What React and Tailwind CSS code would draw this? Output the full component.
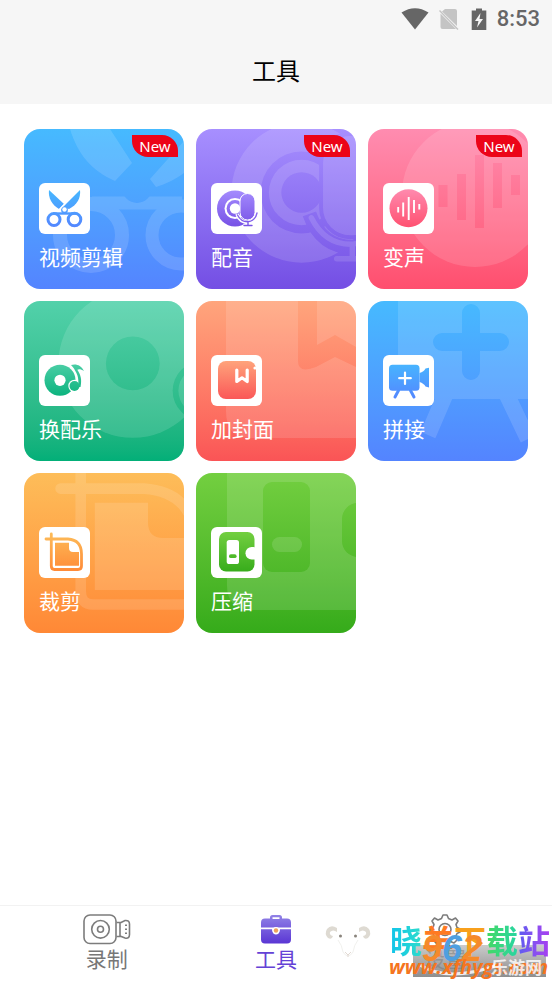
import React from 'react';
import clsx from 'clsx';

// Every glyph is mask content on a 51x51 grid: white is painted, black is cut out
const glyphs = {
  edit: (
    <>
      <g fill="#fff">
        <path d="M10 7 C9 15 13 22 20 26 L25 21 Z" />
        <path d="M41 7 C42 15 38 22 30 26 L24 24 Z" />
        <circle cx="25.5" cy="27" r="3.4" />
      </g>
      <g fill="none" stroke="#fff" strokeWidth="3">
        <circle cx="15" cy="36.5" r="6" />
        <circle cx="35.5" cy="36.5" r="6.3" />
        <path d="M14 30.5 H23 L28 30.5 H37" strokeWidth="2.4" />
      </g>
      <path d="M20 27 L26.5 20" stroke="#000" strokeWidth="1.2" />
      <circle cx="25.5" cy="26.5" r="2.2" fill="#000" />
    </>
  ),
  dub: (
    <>
      <circle cx="24" cy="25.5" r="18" fill="#fff" />
      <circle cx="24" cy="25.5" r="10.5" fill="#000" />
      <circle cx="24" cy="25.5" r="8.4" fill="#fff" />
      <circle cx="24" cy="25.5" r="5.2" fill="#000" />
      <path d="M26 31 Q29 39.5 37 39.5 Q44.5 38 46.5 29" fill="none" stroke="#000" strokeWidth="3.6" />
      <rect x="29" y="10.5" width="15" height="26.5" rx="7.5" fill="#fff" stroke="#000" strokeWidth="1" />
      <path
        d="M26.5 32 Q30 39 37 38.8 Q44.5 37.5 46 30 M37 39 V42.5 M33 42.5 H41"
        fill="none"
        stroke="#fff"
        strokeWidth="1.4"
        strokeLinecap="round"
      />
    </>
  ),
  voice: (
    <>
      <circle cx="25.5" cy="25.3" r="19" fill="#fff" />
      <path
        d="M15.2 24 V29.5 M20.2 19.5 V33.5 M25.7 14 V37 M31 17 V30 M36.3 21 V26.5"
        stroke="#000"
        strokeWidth="1.9"
      />
    </>
  ),
  music: (
    <>
      <circle cx="21" cy="25.3" r="15.5" fill="#fff" />
      <circle cx="21" cy="25.3" r="5.6" fill="#000" />
      <path d="M33 10 C38 17 41 20 41 31" fill="none" stroke="#000" strokeWidth="5" />
      <circle cx="35.5" cy="31" r="6.2" fill="#000" />
      <circle cx="35.5" cy="31" r="5" fill="#fff" />
      <path
        d="M32 10 C37 8.5 42 10 45 16 C42 14 39.5 14 38.3 14.8 C42 20 43 25 41.5 32 H39 C40 25 39 20 36 15.5 C35 13.5 34 12 32 10 Z"
        fill="#fff"
      />
    </>
  ),
  cover: (
    <>
      <rect x="7" y="6" width="38" height="38" rx="8" fill="#fff" />
      <path
        d="M25.8 15 V26.5 L31 22.8 L36.2 26.5 V15"
        fill="none"
        stroke="#000"
        strokeWidth="3.2"
        strokeLinecap="round"
        strokeLinejoin="round"
      />
      <circle cx="44" cy="13" r="1.6" fill="#000" />
    </>
  ),
  join: (
    <>
      <rect x="6" y="9.7" width="30.5" height="26" rx="3.5" fill="#fff" />
      <path d="M36.5 18 Q41 16.5 42.5 13.5 L46 12.8 V32.5 L42.5 31.5 Q41 28.5 36.5 27 Z" fill="#fff" />
      <path d="M15.5 35.5 L12 42 M27.5 35.5 L31 42" stroke="#fff" strokeWidth="3" strokeLinecap="round" />
      <path d="M22 17.5 V29 M16.2 23.2 H27.8" stroke="#000" strokeWidth="2.2" strokeLinecap="round" />
    </>
  ),
  crop: (
    <>
      <path
        d="M7 12 H29 Q42.5 13 42.5 27 V39 Q42.5 42.5 39 42.5 H15.5 Q12.3 42.5 12.3 39 V7"
        fill="none"
        stroke="#fff"
        strokeWidth="2.8"
        strokeLinecap="round"
      />
      <path d="M16 15.7 H30 V21 Q30 25 34 25 H40 V38.7 H16 Z" fill="#fff" />
    </>
  ),
  zip: (
    <>
      <rect x="8" y="5" width="35.5" height="39.5" rx="7" fill="#fff" />
      <rect x="34.5" y="20" width="14" height="12.5" rx="6.2" fill="#000" />
      <rect x="15.7" y="13" width="12.3" height="24" rx="2.6" fill="#000" />
      <rect x="18" y="27.3" width="7.6" height="3.8" rx="1.9" fill="#fff" />
    </>
  ),
};

// Large faded drawings behind the cards, mask content on a 160x160 grid
const motifs = {
  edit: (
    <>
      <path d="M46 0 C54 26 68 42 91 52 L108 34 L86 0 Z" fill="#fff" />
      <path d="M126 50 L160 12 V44 C150 51 142 55 132 58 Z" fill="#fff" />
      <path d="M68 74 H158" stroke="#fff" strokeWidth="13" />
      <circle cx="67" cy="106" r="31" fill="none" stroke="#fff" strokeWidth="14" />
      <circle cx="157" cy="106" r="29" fill="none" stroke="#fff" strokeWidth="13" />
      <circle cx="113" cy="59" r="15" fill="#000" />
    </>
  ),
  dub: <g transform="translate(12 -36) scale(3.9)">{glyphs.dub}</g>,
  voice: (
    <>
      <circle cx="107" cy="65" r="73" fill="#fff" />
      <path d="M75 56 V78 M93.5 45 V91 M111.5 26 V99 M129.5 34 V79 M147.5 46 V66" stroke="#000" strokeWidth="9" />
    </>
  ),
  music: <g transform="translate(8 -59) scale(4.8)">{glyphs.music}</g>,
  cover: (
    <>
      <path d="M30 0 H160 V137 H54 Q30 137 30 110 Z" fill="#fff" />
      <path d="M102 0 H121 V44 L139 34 L160 46 V66 L139 56 L120 66 Q102 73 102 60 Z" fill="#000" />
    </>
  ),
  join: (
    <>
      <path d="M30 0 H160 V98 H42 Q30 98 30 86 Z" fill="#fff" />
      <path d="M78 92 L60 134 M138 92 L160 138" stroke="#fff" strokeWidth="16" />
      <path d="M103 12 V70 M74 41 H132" stroke="#000" strokeWidth="18" strokeLinecap="round" />
    </>
  ),
  crop: <g transform="translate(10 -30) scale(3.8)">{glyphs.crop}</g>,
  zip: (
    <>
      <path d="M31 0 H160 V137 H56 Q31 137 31 112 Z" fill="#fff" />
      <rect x="67" y="9" width="47" height="90" rx="9" fill="#000" />
      <rect x="76" y="64" width="30" height="15" rx="7.5" fill="#fff" />
      <rect x="146" y="30" width="54" height="54" rx="16" fill="#000" />
    </>
  ),
};

const tools = [
  { id: 'edit', label: '视频剪辑', from: '#46baff', to: '#5484ff', isNew: true, bg: 'from-[#46baff] to-[#5484ff]' },
  { id: 'dub', label: '配音', from: '#a78fff', to: '#744ee4', isNew: true, bg: 'from-[#a78fff] to-[#744ee4]' },
  { id: 'voice', label: '变声', from: '#ff8cb0', to: '#ff4e6e', isNew: true, bg: 'from-[#ff8cb0] to-[#ff4e6e]' },
  { id: 'music', label: '换配乐', from: '#52d1aa', to: '#02af78', bg: 'from-[#52d1aa] to-[#02af78]' },
  { id: 'cover', label: '加封面', from: '#ffa57c', to: '#fa5456', bg: 'from-[#ffa57c] to-[#fa5456]' },
  { id: 'join', label: '拼接', from: '#46baff', to: '#5484ff', bg: 'from-[#46baff] to-[#5484ff]' },
  { id: 'crop', label: '裁剪', from: '#fdbd59', to: '#ff8836', bg: 'from-[#fdbd59] to-[#ff8836]' },
  { id: 'zip', label: '压缩', from: '#73cf40', to: '#35ab1a', bg: 'from-[#73cf40] to-[#35ab1a]' },
];

const ToolCard = ({ tool }) => {
  return (
    <button
      type="button"
      className={clsx(
        'relative aspect-square overflow-hidden rounded-2xl bg-linear-to-b text-white cursor-pointer',
        'flex flex-col items-start justify-end gap-2 px-[15px] pb-[19px]',
        tool.bg
      )}
    >
      {/* Faded motif */}
      <svg viewBox="0 0 160 160" className="absolute inset-0 w-full h-full" aria-hidden="true">
        <mask id={`motif-${tool.id}`} maskUnits="userSpaceOnUse" x="0" y="0" width="160" height="160">
          {motifs[tool.id]}
        </mask>
        <rect width="160" height="160" fill="#fff" opacity="0.13" mask={`url(#motif-${tool.id})`} />
      </svg>

      {tool.isNew && (
        <span className="absolute top-1.5 right-1.5 w-[46px] h-[22px] rounded-tr-2xl rounded-bl-2xl bg-[#ec0418] text-[15px] leading-[22px] text-center font-['Noto_Sans',sans-serif]">
          New
        </span>
      )}

      <span className="relative w-[51px] h-[51px] rounded-md bg-white">
        <svg viewBox="0 0 51 51" className="w-full h-full" aria-hidden="true">
          <mask id={`icon-${tool.id}`} maskUnits="userSpaceOnUse" x="0" y="0" width="51" height="51">
            {glyphs[tool.id]}
          </mask>
          <linearGradient id={`grad-${tool.id}`} x1="0" y1="0" x2="0" y2="1">
            <stop offset="0.1" stopColor={tool.from} />
            <stop offset="0.9" stopColor={tool.to} />
          </linearGradient>
          <rect width="51" height="51" fill={`url(#grad-${tool.id})`} mask={`url(#icon-${tool.id})`} />
        </svg>
      </span>
      <span className="relative text-[21px] leading-7">{tool.label}</span>
    </button>
  );
};

const StatusBar = () => (
  <div className="flex h-[38px] items-center justify-end pr-3 text-[#666]">
    <svg width="28" height="22" viewBox="0 0 28 22" className="mr-2.5" aria-hidden="true">
      <path d="M0.5 4.5 Q14 -4 27.5 4.5 L14 21.5 Z" fill="currentColor" />
    </svg>
    <svg width="20" height="23" viewBox="0 0 20 23" className="mr-3" aria-hidden="true">
      <path d="M6 1 H16 Q18 1 18 3 V18 L3 3.5 Z M1.5 5.5 L17 21 H3.5 Q1.5 21 1.5 19 Z" fill="#c4c4c4" />
      <path d="M0.5 2.5 L19 21.5" stroke="#c4c4c4" strokeWidth="1.4" />
    </svg>
    <svg width="16" height="23" viewBox="0 0 16 23" className="mr-2.5" aria-hidden="true">
      <path d="M5 0.5 H11 V2.5 H15.3 V22 H0.7 V2.5 H5 Z" fill="currentColor" />
      <path d="M9.5 5 L4 13 H7.5 L6 19.5 L12 11 H8.5 Z" fill="#f6f6f6" />
    </svg>
    <span className="font-[Roboto,sans-serif] font-medium text-[22px] leading-6">8:53</span>
  </div>
);

const RecordIcon = () => (
  <svg width="48" height="31" viewBox="0 0 48 31" fill="none" stroke="#7c7c7c" strokeWidth="1.6" aria-hidden="true">
    <rect x="1" y="1" width="32" height="28.5" rx="6" />
    <circle cx="17.5" cy="15.3" r="8.8" />
    <circle cx="17.5" cy="15.3" r="3" />
    <path d="M33.5 8.5 H37 V22.5 H33.5 M37 9 L42 6.5 Q46.5 6 46.5 10 V20.5 Q46.5 25 42 24 L37 22" />
    <path d="M43 10.5 V12 M43 14.5 V16 M43 18.5 V20" strokeWidth="2" />
  </svg>
);

const ToolboxIcon = () => (
  <svg width="32" height="31" viewBox="0 0 32 31" aria-hidden="true">
    <defs>
      <linearGradient id="toolbox" x1="0" y1="0" x2="0" y2="1">
        <stop offset="0" stopColor="#9182e6" />
        <stop offset="1" stopColor="#5a36d4" />
      </linearGradient>
    </defs>
    <path
      d="M10 4.5 V3.5 Q10 1 12.5 1 H19.5 Q22 1 22 3.5 V4.5 H27 Q31 4.5 31 8.5 V13.5 H1 V8.5 Q1 4.5 5 4.5 Z M12.5 3.2 V5 H19.5 V3.2 Z M1 15.3 H12 Q13 20.5 16 20.5 Q19 20.5 20 15.3 H31 V25.5 Q31 29.5 27 29.5 H5 Q1 29.5 1 25.5 Z"
      fill="url(#toolbox)"
      fillRule="evenodd"
    />
    <circle cx="16" cy="16.5" r="3.6" fill="#fff" />
    <circle cx="16" cy="16.5" r="2.2" fill="#f0a35c" />
  </svg>
);

const GearIcon = () => (
  <svg width="32" height="31" viewBox="0 0 32 31" fill="none" stroke="#7c7c7c" strokeWidth="1.6" aria-hidden="true">
    <path
      d="M12.5 4.5 L14 1 H18 L19.5 4.5 L23 6 L26.5 4 L29 7 L27 10.5 L28 13.5 L31 15 V18 L28 19.5 L26.5 23 L28 26 L25 29 L21.5 27.5 H10.5 L7 29 L4 26 L5.5 23 L4 19.5 L1 18 V15 L4 13.5 L5 10.5 L3 7 L5.5 4 L9 6 Z"
      strokeLinejoin="round"
    />
    <circle cx="16" cy="15.5" r="6" />
  </svg>
);

const tabs = [
  { label: '录制', icon: RecordIcon },
  { label: '工具', icon: ToolboxIcon, active: true },
  { label: '设置', icon: GearIcon },
];

const RamLogo = () => (
  <svg width="48" height="40" viewBox="0 0 48 40" fill="none" aria-hidden="true">
    <path d="M13 5 Q7 1 3 6 Q0 11 4 15 Q8 17 9 13 Q5 12 6 9 Q9 6 13 9 Z" fill="#dedad2" />
    <path d="M35 5 Q41 1 45 6 Q48 11 44 15 Q40 17 39 13 Q43 12 42 9 Q39 6 35 9 Z" fill="#dedad2" />
    <path d="M14 17 Q18 22 19 29 Q24 37 29 29 Q30 22 34 17" stroke="#f1f1ee" strokeWidth="1" />
    <path d="M21 29 L24 32 L27 29 M24 32 V34" stroke="#e2d9d3" strokeWidth="1" />
    <circle cx="16.5" cy="13" r="1.5" fill="#8a847c" />
    <circle cx="31.5" cy="13" r="1.5" fill="#8a847c" />
  </svg>
);

const Watermark = () => (
  <div className="pointer-events-none absolute right-0 bottom-0 w-[232px] h-[78px]">
    <div className="absolute left-1 top-[18px]">
      <RamLogo />
    </div>
    <div className="absolute right-1.5 bottom-1.5 w-[133px] h-8 bg-linear-to-b from-[#b5b5b5]/70 to-[#828282]/90" />
    <svg width="94" height="20" viewBox="0 0 94 20" className="absolute left-[94px] bottom-1.5" aria-hidden="true">
      <path d="M6 8 Q34 26 84 8" fill="none" stroke="#eee" strokeWidth="3" />
    </svg>
    <span className="absolute right-0.5 top-3.5 text-[32px] leading-10 font-bold whitespace-nowrap">
      <span className="bg-linear-to-r from-[#12c4ea] to-[#2ddccb] bg-clip-text text-transparent">晓</span>
      <span className="text-[#ff7a22]">羊</span>
      <span className="text-[#f8a01c]">下</span>
      <span className="bg-linear-to-r from-[#45d860] to-[#25d5a2] bg-clip-text text-transparent">载</span>
      <span className="bg-linear-to-r from-[#5b5cf0] to-[#a83cf0] bg-clip-text text-transparent">站</span>
    </span>
    <span className="absolute left-[102px] top-[26px] font-['Liberation_Sans',sans-serif] text-[36px] leading-9 font-bold italic text-[#f58a2c]">
      9<span className="text-[#4f9fe0]">6</span>2
    </span>
    <span className="absolute right-1 bottom-1 font-['Open_Sans',sans-serif] text-[20px] leading-6 font-bold italic text-[#f5751f]">
      www.xfhygs.com
    </span>
    <span className="absolute right-2.5 bottom-1 text-[17px] leading-6 font-bold text-white/80">
      乐游网
    </span>
  </div>
);

const App = () => {
  return (
    <div className="relative min-h-screen flex flex-col bg-white font-['Noto_Sans_CJK_SC',sans-serif]">
      <header className="bg-[#f6f6f6] h-[104px]">
        <StatusBar />
        <h1 className="pt-3.5 text-center text-2xl leading-9 font-normal text-black">工具</h1>
      </header>

      <main className="flex-1 px-6 py-[25px]">
        <div className="grid grid-cols-3 gap-3">
          {tools.map((tool) => (
            <ToolCard key={tool.id} tool={tool} />
          ))}
        </div>
      </main>

      <nav className="grid grid-cols-3 h-[78px] px-[22px] border-t border-[#f2f2f2]">
        {tabs.map(({ label, icon: Icon, active }) => (
          <button
            key={label}
            type="button"
            className={clsx(
              'flex flex-col items-center pt-2 cursor-pointer',
              active ? 'text-[#6442d6]' : 'text-[#777]'
            )}
          >
            <Icon />
            <span className="text-[21px] leading-[26px]">{label}</span>
          </button>
        ))}
      </nav>

      <Watermark />
    </div>
  );
};

export default App;
